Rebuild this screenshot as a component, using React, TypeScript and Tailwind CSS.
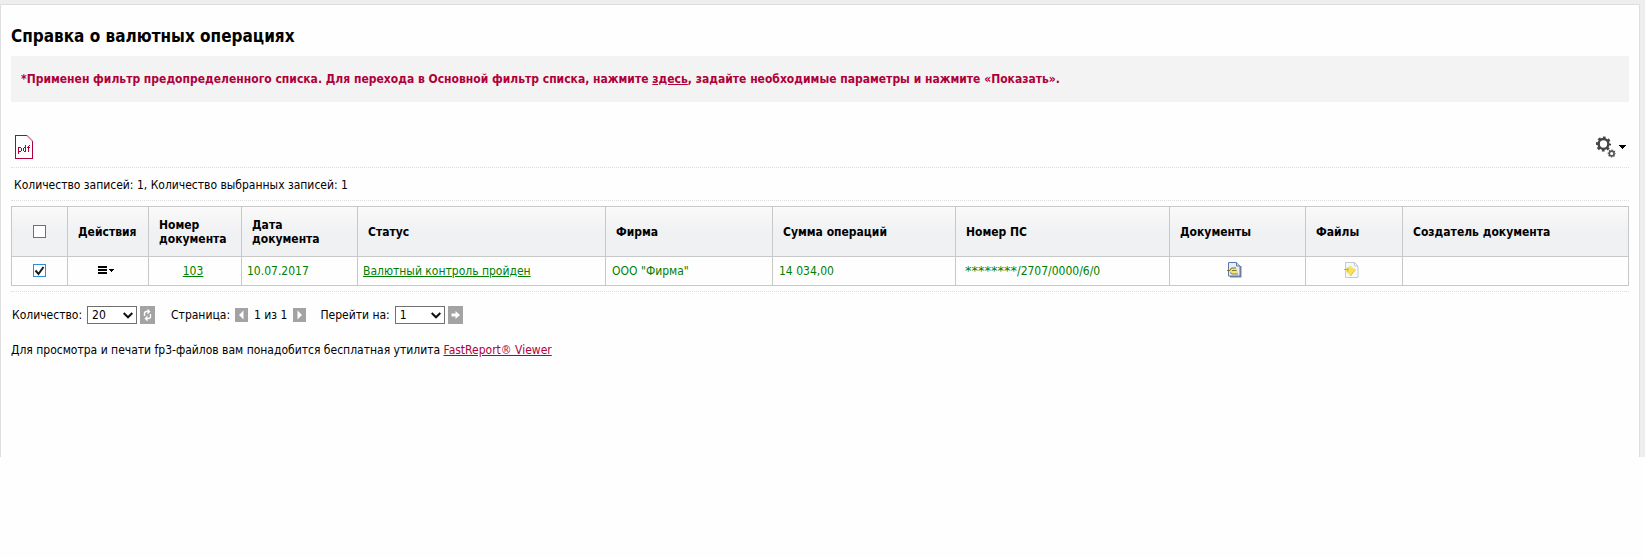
import React, { useState } from 'react';

interface Column {
  title: string;
  width: string;
}

const columns: Column[] = [
  { title: 'Действия', width: 'w-[81px]' },
  { title: 'Номер документа', width: 'w-[93px]' },
  { title: 'Дата документа', width: 'w-[116px]' },
  { title: 'Статус', width: 'w-[248px]' },
  { title: 'Фирма', width: 'w-[167px]' },
  { title: 'Сумма операций', width: 'w-[183px]' },
  { title: 'Номер ПС', width: 'w-[214px]' },
  { title: 'Документы', width: 'w-[136px]' },
  { title: 'Файлы', width: 'w-[97px]' },
  { title: 'Создатель документа', width: '' },
];

function PdfIcon() {
  return (
    <svg width="18" height="24" viewBox="0 0 18 24" fill="none" shapeRendering="crispEdges">
      <path d="M12 .5H.5v23h17V6" stroke="#b0003a" />
      <path d="M12 .5l5.5 5.5" stroke="#d88a9f" strokeWidth="1.5" shapeRendering="auto" />
      <path d="M3.5 12v7M4 12.5h2M6.5 13v3M4 16.5h2M10.5 10v7M9 12.5h1M8.5 13v3M9 16.5h1M13.5 11v6M14 10.5h1M12 12.5h3" stroke="#b0003a" />
    </svg>
  );
}

function GearsIcon() {
  return (
    <svg width="20" height="22" viewBox="0 0 20 22" fill="none" stroke="#444">
      <circle cx="7.5" cy="8" r="4.9" strokeWidth="2.5" />
      <circle cx="7.5" cy="8" r="6.5" strokeWidth="2.2" strokeDasharray="2.7 2.405" strokeDashoffset="1.35" />
      <circle cx="15.7" cy="17.5" r="2.4" strokeWidth="1.6" stroke="#555" />
      <circle cx="15.7" cy="17.5" r="3.4" strokeWidth="1.3" strokeDasharray="1.4 1.27" strokeDashoffset=".7" stroke="#555" />
    </svg>
  );
}

function MenuIcon() {
  return (
    <svg width="16" height="8" viewBox="0 0 16 8" shapeRendering="crispEdges">
      <path d="M0 0h9v2H0zM0 3h9v2H0zM0 6h9v2H0zM11 3h5v1h-1v1h-1v1h-1V5h-1V4h-1z" />
    </svg>
  );
}

function DocumentIcon() {
  return (
    <svg width="15" height="16" viewBox="0 0 15 16" fill="none">
      <path d="M3 4h11.5v11.5H3z" fill="#7b8290" />
      <path d="M1.5.5h8L13 4v10H1.5z" fill="#e6eefb" stroke="#5f78ab" />
      <path d="M9.5.5V4H13" fill="#c8d5ee" stroke="#5f78ab" />
      <path d="M2 7l2-1.5h5l1.500 3 .5 3H5L2 9.500z" fill="#efe676" />
      <path d="M0 8.500h3l1.500-2.500H9M5 8.500h4.500M3 10.500l2 1.500h6" stroke="#6d6a3a" strokeWidth=".9" />
    </svg>
  );
}

function FileIcon() {
  return (
    <svg width="15" height="16" viewBox="0 0 15 16" fill="none">
      <path d="M1.5.5h9L14 4v11.5H1.5z" fill="#f4f7fb" stroke="#c3cad4" />
      <path d="M10.5.5V4H14" stroke="#c3cad4" />
      <path d="M1 6l4-1 1-1.5 5.5 4-5 6.5-5-5z" fill="#f8e25a" />
      <path d="M0 7.5h4M4 6v3.5" stroke="#b4ab77" />
      <path d="M6.5 14l5-6.5" stroke="#dfc23a" />
    </svg>
  );
}

function Checkbox({ label, checked, onChange }: { label: string; checked: boolean; onChange: () => void }) {
  return (
    <span className="relative mx-auto block h-[13px] w-[13px]">
      <input
        type="checkbox"
        aria-label={label}
        checked={checked}
        onChange={onChange}
        className="block h-full w-full appearance-none border border-[#707070] bg-white checked:border-[#2a8fd4]"
      />
      {checked && (
        <svg className="pointer-events-none absolute inset-0" width="13" height="13" viewBox="0 0 13 13" fill="none">
          <path d="M2.5 6.5l3 3.5 5-7" stroke="#1a1a1a" strokeWidth="2" />
        </svg>
      )}
    </span>
  );
}

function Picker({ id, options }: { id: string; options: string[] }) {
  return (
    <span className="relative">
      <select id={id} className="block h-[18px] w-[50px] appearance-none border border-[#707070] bg-white pl-1 leading-4 text-black">
        {options.map((o) => (
          <option key={o}>{o}</option>
        ))}
      </select>
      <svg className="pointer-events-none absolute top-[6px] right-1" width="10" height="7" viewBox="0 0 10 7" fill="none">
        <path d="M.7 1L5 5.3 9.3 1" stroke="#111" strokeWidth="2" />
      </svg>
    </span>
  );
}

export default function App() {
  const [selected, setSelected] = useState(true);
  const [all, setAll] = useState(false);

  return (
    <div className="min-h-screen bg-[#fefefe] font-['DejaVu_Sans_Condensed','DejaVu_Sans',sans-serif] text-[12px] leading-[14px] text-black">
      <div className="bg-[#eee] pt-1 pr-[5px]">
        <main className="min-h-[453px] border border-b-0 border-[#ddd] bg-[#fefefe] px-[10px] pt-[19px]">
          <h1 className="mb-2 text-[17px] leading-6 font-bold">Справка о валютных операциях</h1>

          <p className="bg-[#f3f3f3] px-[10px] py-4 font-bold text-[#b0003a]">
            *Применен фильтр предопределенного списка. Для перехода в Основной фильтр списка, нажмите{' '}
            <a href="#" className="underline">здесь</a>, задайте необходимые параметры и нажмите «Показать».
          </p>

          <div className="mt-[26px] flex items-center justify-between border-b border-dotted border-[#ddd] pt-[7px] pr-[3px] pb-2 pl-1">
            <button aria-label="PDF"><PdfIcon /></button>
            <button aria-label="Настройки" className="flex items-center gap-[3px]">
              <GearsIcon />
              <svg width="7" height="4" viewBox="0 0 7 4" shapeRendering="crispEdges">
                <path d="M0 0h7v1H6v1H5v1H4v1H3V3H2V2H1V1H0z" />
              </svg>
            </button>
          </div>

          <div className="mb-[5px] border-b border-dotted border-[#ddd] px-[3px] pt-[10px] pb-2">
            Количество записей: 1, Количество выбранных записей: {selected ? 1 : 0}
          </div>

          <table className="w-full table-fixed border-collapse [&_td]:border [&_td]:border-[#c8c8c8] [&_th]:border [&_th]:border-[#c8c8c8]">
            <thead>
              <tr className="h-[50px] bg-linear-to-b from-[#fafafa] to-[#f0f1f3] to-50% text-left">
                <th className="w-[56px]">
                  <Checkbox label="Выбрать все" checked={all} onChange={() => setAll(!all)} />
                </th>
                {columns.map((c) => (
                  <th key={c.title} className={`px-[10px] font-bold ${c.width}`}>{c.title}</th>
                ))}
              </tr>
            </thead>
            <tbody>
              <tr className="h-[29px] text-[#008000]">
                <td className="pb-[2px]">
                  <Checkbox label="Выбрать документ 103" checked={selected} onChange={() => setSelected(!selected)} />
                </td>
                <td className="pr-1 pb-[2px]">
                  <button aria-label="Действия" className="mx-auto block"><MenuIcon /></button>
                </td>
                <td className="pr-1 text-center"><a href="#" className="underline">103</a></td>
                <td className="px-[5px]">10.07.2017</td>
                <td className="px-[5px]"><a href="#" className="underline">Валютный контроль пройден</a></td>
                <td className="px-[6px]">ООО "Фирма"</td>
                <td className="px-[6px]">14 034,00</td>
                <td className="px-[9px]"><span className="font-['DejaVu_Sans',sans-serif] text-[13px]">********</span>/2707/0000/6/0</td>
                <td className="pr-[6px] pb-[2px]"><button aria-label="Документы" className="mx-auto block"><DocumentIcon /></button></td>
                <td className="pr-[6px] pb-[2px]"><button aria-label="Файлы" className="mx-auto block"><FileIcon /></button></td>
                <td></td>
              </tr>
            </tbody>
          </table>

          <div className="mt-[5px] flex items-center border-t border-dotted border-[#ddd] pt-[14px] pl-px">
            <label htmlFor="count" className="mr-[5px]">Количество:</label>
            <Picker id="count" options={['20', '50', '100']} />
            <button aria-label="Обновить" className="mr-4 ml-[3px] bg-[#a3a3a3]">
              <svg width="15" height="18" viewBox="0 0 15 18" fill="none" stroke="#fff" strokeWidth="1.4">
                <path d="M4.500 10V7.500q0-2 2-2H8M10.500 8v2.500q0 2-2 2H7" />
                <path d="M7.500 2.500l3 3-3 3zM7.500 9.500l-3 3 3 3z" fill="#fff" stroke="none" />
              </svg>
            </button>
            <span className="mr-[5px]">Страница:</span>
            <button aria-label="Предыдущая" className="bg-[#a3a3a3]">
              <svg width="13" height="14" viewBox="0 0 13 14"><path d="M8.5 2.5v9L4 7z" fill="#fff" /></svg>
            </button>
            <span className="mx-[6px]">1 из 1</span>
            <button aria-label="Следующая" className="mr-[14px] bg-[#a3a3a3]">
              <svg width="13" height="14" viewBox="0 0 13 14"><path d="M4.5 2.5v9L9 7z" fill="#fff" /></svg>
            </button>
            <label htmlFor="page" className="mr-[5px]">Перейти на:</label>
            <Picker id="page" options={['1']} />
            <button aria-label="Перейти" className="ml-[3px] bg-[#a3a3a3]">
              <svg width="15" height="18" viewBox="0 0 15 18"><path d="M3.5 7.5h4V5L12 9l-4.5 4v-2.5h-4z" fill="#fff" /></svg>
            </button>
          </div>

          <p className="mt-[19px]">
            Для просмотра и печати fp3-файлов вам понадобится бесплатная утилита{' '}
            <a href="#" className="text-[#b0003a] underline">FastReport® Viewer</a>
          </p>
        </main>
      </div>
    </div>
  );
}
